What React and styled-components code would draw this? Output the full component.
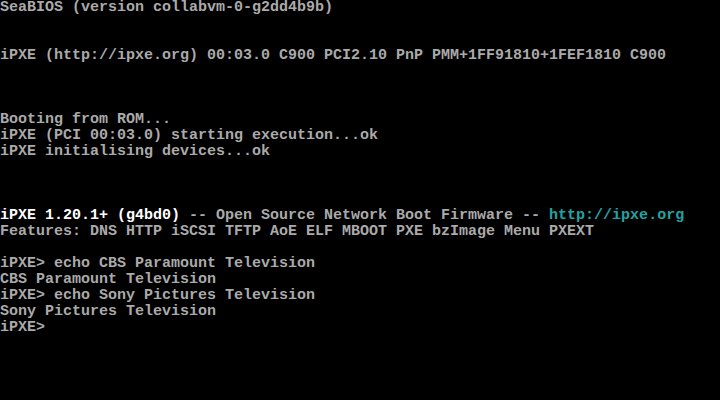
import React from 'react';
import styled, { createGlobalStyle } from 'styled-components';

const Global = createGlobalStyle`
  html, body {
    margin: 0;
    padding: 0;
    background: #000;
  }
`;

const Screen = styled.div`
  width: 720px;
  height: 400px;
  background: #000;
  color: #aaaaaa;
  font-family: 'Liberation Mono', 'DejaVu Sans Mono', monospace;
  font-size: 15px;
  font-weight: 700;
  line-height: 16px;
  overflow: hidden;
  display: flex;
  flex-direction: column;
`;

const Line = styled.div`
  height: 16px;
  white-space: pre;
`;

const Bright = styled.span`
  color: #ffffff;
`;

const Link = styled.span`
  color: #22a3a3;
`;

const lines = [
  'SeaBIOS (version collabvm-0-g2dd4b9b)',
  '',
  '',
  'iPXE (http://ipxe.org) 00:03.0 C900 PCI2.10 PnP PMM+1FF91810+1FEF1810 C900',
  '',
  '',
  '',
  'Booting from ROM...',
  'iPXE (PCI 00:03.0) starting execution...ok',
  'iPXE initialising devices...ok',
  '',
  '',
  '',
  'BANNER',
  'Features: DNS HTTP iSCSI TFTP AoE ELF MBOOT PXE bzImage Menu PXEXT',
  '',
  'iPXE> echo CBS Paramount Television',
  'CBS Paramount Television',
  'iPXE> echo Sony Pictures Television',
  'Sony Pictures Television',
  'iPXE>',
];

export default function App() {
  return (
    <>
      <Global />
      <Screen>
        {lines.map((text, i) =>
          text === 'BANNER' ? (
            <Line key={i}>
              <Bright>iPXE 1.20.1+ (g4bd0)</Bright> -- Open Source Network Boot Firmware --{' '}
              <Link>http://ipxe.org</Link>
            </Line>
          ) : (
            <Line key={i}>{text}</Line>
          )
        )}
      </Screen>
    </>
  );
}
